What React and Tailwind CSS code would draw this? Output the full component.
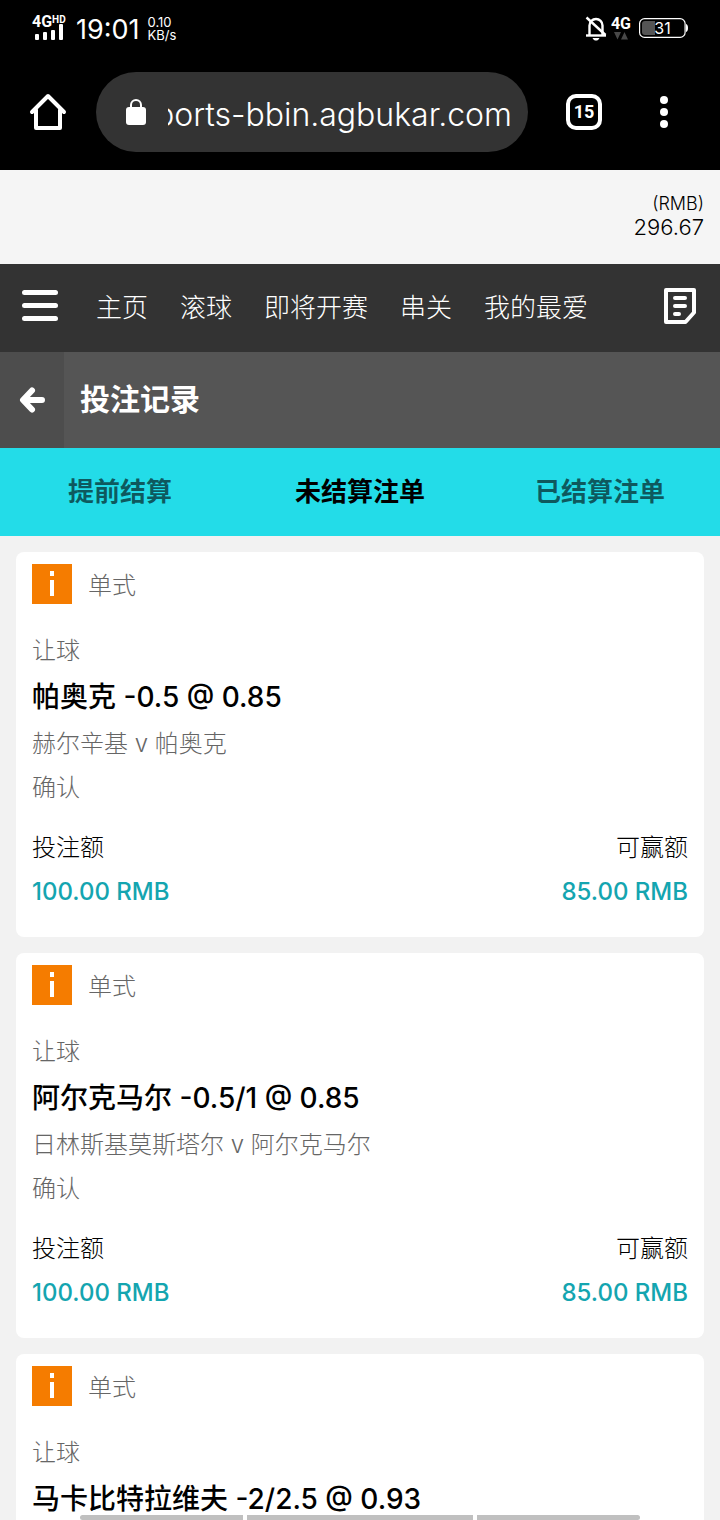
const FONT = "font-['Inter','Noto_Sans_CJK_SC',sans-serif]"

const NAV = ['主页', '滚球', '即将开赛', '串关', '我的最爱']

const TABS = [
  { id: 'early', label: '提前结算' },
  { id: 'open', label: '未结算注单' },
  { id: 'settled', label: '已结算注单' },
]

const BETS = [
  { id: 1, pick: '帕奥克 -0.5 @ 0.85', match: '赫尔辛基 v 帕奥克', stake: '100.00', win: '85.00' },
  { id: 2, pick: '阿尔克马尔 -0.5/1 @ 0.85', match: '日林斯基莫斯塔尔 v 阿尔克马尔', stake: '100.00', win: '85.00' },
  { id: 3, pick: '马卡比特拉维夫 -2/2.5 @ 0.93' },
]

function StatusBar() {
  return (
    <div className="flex h-14 items-center justify-between pr-[34px] pl-8">
      <div className="flex items-center">
        <div className="w-9">
          <div className="flex h-3 items-start font-['Roboto',sans-serif] font-bold">
            <span className="text-base leading-3">4G</span>
            <span className="text-[10px] leading-2">HD</span>
          </div>
          <svg className="-mt-1 block" width="36" height="16" viewBox="0 0 36 16" fill="currentColor" aria-hidden="true">
            <rect x="3" y="10" width="4" height="6" rx="1" />
            <rect x="11" y="8" width="4" height="8" rx="1" />
            <rect x="19" y="6" width="4" height="10" rx="1" />
            <rect x="27" y="0" width="4" height="16" rx="1" />
          </svg>
        </div>
        <span className="ml-2 pt-1 text-[27px] leading-8">19:01</span>
        <div className="ml-2 pt-0.5 text-[13px] leading-[13px]">
          <div>0.10</div>
          <div>KB/s</div>
        </div>
      </div>

      <div className="flex items-center">
        <svg width="22" height="26" viewBox="0 0 22 26" fill="none" stroke="currentColor" strokeWidth="2.400" aria-hidden="true">
          <path d="M4.500 20V10.500a6.500 6.500 0 0 1 13 0V20" />
          <path d="M1 20.500h20" />
          <path d="M1.500 2.500 20.500 20" />
          <path d="M7.500 23h7c-1 2-2 2.500-3.500 2.500S8.500 25 7.500 23Z" fill="currentColor" stroke="none" />
        </svg>
        <div className="ml-1 flex flex-col items-center">
          <span className="font-['Roboto',sans-serif] text-base leading-4 font-bold">4G</span>
          <svg width="14" height="8" viewBox="0 0 14 8" fill="#484848" aria-hidden="true">
            <path d="M0 0h7L3.500 7.500ZM7 7.500h7L10.500 0Z" />
          </svg>
        </div>
        <div className="relative ml-2 flex h-5 w-[47px] items-center justify-center">
          <svg className="absolute inset-0" width="50" height="20" viewBox="0 0 50 20" fill="none" aria-hidden="true">
            <rect x="0.600" y="0.600" width="45.500" height="18.800" rx="5" stroke="#fff" strokeWidth="1.200" />
            <path d="M6 3h10v14H6a3 3 0 0 1-3-3V6a3 3 0 0 1 3-3Z" fill="#555" />
            <path d="M47 6c1.500.5 2 2 2 4s-.5 3.500-2 4Z" fill="#fff" />
          </svg>
          <span className="relative text-base leading-5">31</span>
        </div>
      </div>
    </div>
  )
}

function AddressBar() {
  return (
    <div className="flex items-center pt-4 pr-[52px] pb-[18px] pl-7">
      <button type="button" aria-label="Home" className="shrink-0">
        <svg width="40" height="40" viewBox="0 0 40 40" fill="none" stroke="currentColor" strokeWidth="4" strokeLinejoin="round" strokeLinecap="round" aria-hidden="true">
          <path d="M8 18v18h24V18" />
          <path d="M4 20 20 4l16 16" />
        </svg>
      </button>
      <div className="ml-7 flex h-20 min-w-0 flex-1 items-center rounded-full bg-[#333] pr-4 pl-[30px]">
        <svg className="shrink-0" width="20" height="28" viewBox="0 0 20 28" aria-hidden="true">
          <path d="M5 10V7a5 5 0 0 1 10 0v3" fill="none" stroke="#fff" strokeWidth="2" />
          <rect y="9" width="20" height="18" rx="3" fill="#fff" />
        </svg>
        <input
          type="text"
          readOnly
          aria-label="Address"
          value="sports-bbin.agbukar.com"
          className="ml-[22px] h-14 w-full min-w-0 bg-transparent pt-1 text-[32px] font-light outline-none [direction:rtl]"
        />
      </div>
      <button
        type="button"
        aria-label="Tabs"
        className="ml-[38px] flex size-9 shrink-0 items-center justify-center rounded-[10px] border-4 border-white font-['Roboto',sans-serif] text-lg leading-5 font-bold"
      >
        15
      </button>
      <button type="button" aria-label="Menu" className="ml-[58px] shrink-0">
        <svg width="8" height="32" viewBox="0 0 8 32" fill="currentColor" aria-hidden="true">
          <circle cx="4" cy="4" r="4" />
          <circle cx="4" cy="16" r="4" />
          <circle cx="4" cy="28" r="4" />
        </svg>
      </button>
    </div>
  )
}

function SiteNav() {
  return (
    <nav className="flex h-22 items-start bg-[#333] pt-6 pr-6 pl-[22px] text-white">
      <button type="button" aria-label="菜单" className="shrink-0">
        <svg width="36" height="36" viewBox="0 0 36 36" fill="currentColor" aria-hidden="true">
          <rect y="2" width="36" height="5" rx="2.500" />
          <rect y="15" width="36" height="5" rx="2.500" />
          <rect y="28" width="36" height="5" rx="2.500" />
        </svg>
      </button>
      <div className="ml-[38px] flex flex-1 gap-8 text-[26px] leading-10 font-light whitespace-nowrap">
        {NAV.map((label) => (
          <a key={label} href="#">{label}</a>
        ))}
      </div>
      <button type="button" aria-label="注单" className="shrink-0">
        <svg width="32" height="36" viewBox="0 0 32 36" fill="none" stroke="currentColor" strokeWidth="4" aria-hidden="true">
          <path d="M2 2h28v22.500L21.500 34H2Z" strokeLinejoin="round" />
          <path d="M11 10h10M11 18h10M11 26h4" strokeLinecap="round" />
        </svg>
      </button>
    </nav>
  )
}

function BetCard({ bet }) {
  return (
    <article className="shrink-0 rounded-lg bg-white px-4 pt-3 pb-[23px] text-2xl leading-11 font-light text-[#666]">
      <div className="mb-[21px] flex h-11 items-start gap-4">
        <button type="button" aria-label="详情" className="size-10 bg-[#f57c00]">
          <svg width="40" height="40" viewBox="0 0 40 40" fill="#fff" aria-hidden="true">
            <rect x="18" y="7" width="4" height="5" />
            <rect x="18" y="16" width="4" height="16" />
          </svg>
        </button>
        <span>单式</span>
      </div>
      <p>让球</p>
      <h2 className="text-[28px] leading-[49px] font-medium text-black">{bet.pick}</h2>
      {bet.match ? (
        <>
          <p>{bet.match}</p>
          <p>确认</p>
          <dl className="mt-4 flex justify-between">
            <div>
              <dt className="text-black">投注额</dt>
              <dd className="font-medium text-[#14a5b0]">{bet.stake} RMB</dd>
            </div>
            <div className="text-right">
              <dt className="text-black">可赢额</dt>
              <dd className="font-medium text-[#14a5b0]">{bet.win} RMB</dd>
            </div>
          </dl>
        </>
      ) : null}
    </article>
  )
}

export default function App() {
  return (
    <div className={`relative flex h-screen flex-col overflow-hidden bg-[#f2f2f2] ${FONT}`}>
      <header className="shrink-0 bg-black text-white">
        <StatusBar />
        <AddressBar />
      </header>

      <div className="flex h-[94px] shrink-0 flex-col items-end justify-center bg-[#f5f5f5] pr-4 pb-1 font-light text-black">
        <span className="text-lg leading-6">(RMB)</span>
        <span className="text-[22px] leading-[22px]">296.67</span>
      </div>

      <div className="shrink-0">
        <SiteNav />
        <div className="flex h-24 items-center bg-[#555] text-white">
          <button type="button" aria-label="返回" className="flex h-full w-16 items-center justify-center bg-[#4d4d4d]">
            <svg width="28" height="28" viewBox="0 0 28 28" fill="none" stroke="currentColor" strokeWidth="6" strokeLinecap="round" strokeLinejoin="round" aria-hidden="true">
              <path d="M14 4.500 5 14l9 9.500M6 14h18" />
            </svg>
          </button>
          <h1 className="ml-4 pb-0.5 text-[30px] leading-10 font-bold">投注记录</h1>
        </div>
        <div className="grid h-22 grid-cols-3 bg-[#23dce8]">
          {TABS.map((tab) => (
            <button
              key={tab.id}
              type="button"
              className={`pb-0.5 text-[26px] font-bold ${tab.id === 'open' ? 'text-black' : 'text-black/60'}`}
            >
              {tab.label}
            </button>
          ))}
        </div>
      </div>

      <main className="flex min-h-0 flex-1 flex-col gap-4 overflow-hidden px-4 pt-4">
        {BETS.map((bet) => (
          <BetCard key={bet.id} bet={bet} />
        ))}
      </main>

      {/* gesture hints of the phone, over the page */}
      <div className="absolute inset-x-20 bottom-0 flex h-[5px] gap-1">
        <div className="flex-1 rounded-l-full bg-[#c0c0c0]" />
        <div className="w-[226px] bg-[#c0c0c0]" />
        <div className="flex-1 rounded-r-full bg-[#c0c0c0]" />
      </div>
    </div>
  )
}
